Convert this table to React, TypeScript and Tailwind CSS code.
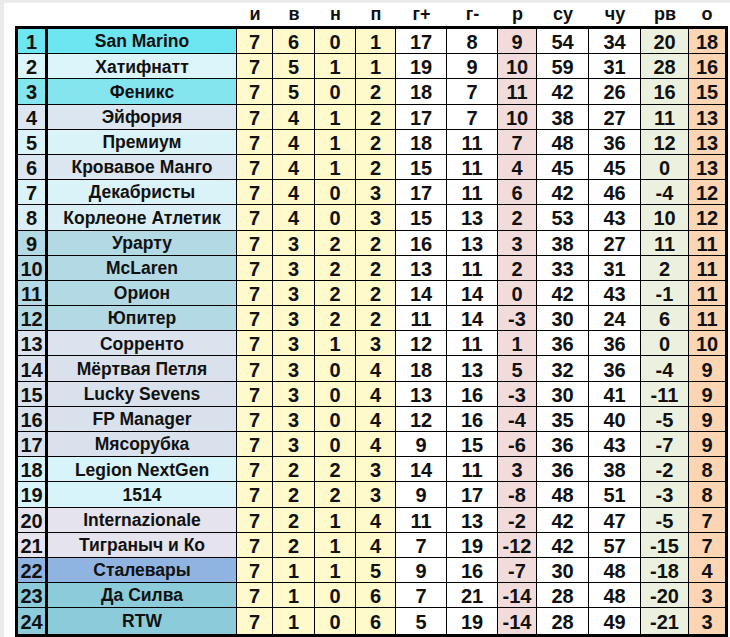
import React from 'react';

type Row = {
  name: string;
  bg: string;
  stats: number[];
};

const rows: Row[] = [
  { name: 'San Marino', bg: 'bg-[#6de6f2]', stats: [7, 6, 0, 1, 17, 8, 9, 54, 34, 20, 18] },
  { name: 'Хатифнатт', bg: 'bg-[#dbf5fa]', stats: [7, 5, 1, 1, 19, 9, 10, 59, 31, 28, 16] },
  { name: 'Феникс', bg: 'bg-[#84e5ef]', stats: [7, 5, 0, 2, 18, 7, 11, 42, 26, 16, 15] },
  { name: 'Эйфория', bg: 'bg-[#dbe6f0]', stats: [7, 4, 1, 2, 17, 7, 10, 38, 27, 11, 13] },
  { name: 'Премиум', bg: 'bg-[#d9f3f8]', stats: [7, 4, 1, 2, 18, 11, 7, 48, 36, 12, 13] },
  { name: 'Кровавое Манго', bg: 'bg-[#dbe6f0]', stats: [7, 4, 1, 2, 15, 11, 4, 45, 45, 0, 13] },
  { name: 'Декабристы', bg: 'bg-[#d9f3f8]', stats: [7, 4, 0, 3, 17, 11, 6, 42, 46, -4, 12] },
  { name: 'Корлеоне Атлетик', bg: 'bg-[#d9eff5]', stats: [7, 4, 0, 3, 15, 13, 2, 53, 43, 10, 12] },
  { name: 'Урарту', bg: 'bg-[#b3d9e4]', stats: [7, 3, 2, 2, 16, 13, 3, 38, 27, 11, 11] },
  { name: 'McLaren', bg: 'bg-[#b3d9e4]', stats: [7, 3, 2, 2, 13, 11, 2, 33, 31, 2, 11] },
  { name: 'Орион', bg: 'bg-[#b3d9e4]', stats: [7, 3, 2, 2, 14, 14, 0, 42, 43, -1, 11] },
  { name: 'Юпитер', bg: 'bg-[#b3d9e4]', stats: [7, 3, 2, 2, 11, 14, -3, 30, 24, 6, 11] },
  { name: 'Сорренто', bg: 'bg-[#dbe3ee]', stats: [7, 3, 1, 3, 12, 11, 1, 36, 36, 0, 10] },
  { name: 'Мёртвая Петля', bg: 'bg-[#d9e2ec]', stats: [7, 3, 0, 4, 18, 13, 5, 32, 36, -4, 9] },
  { name: 'Lucky Sevens', bg: 'bg-[#d9e2ec]', stats: [7, 3, 0, 4, 13, 16, -3, 30, 41, -11, 9] },
  { name: 'FP Manager', bg: 'bg-[#d9e2ec]', stats: [7, 3, 0, 4, 12, 16, -4, 35, 40, -5, 9] },
  { name: 'Мясорубка', bg: 'bg-[#d9e2ec]', stats: [7, 3, 0, 4, 9, 15, -6, 36, 43, -7, 9] },
  { name: 'Legion NextGen', bg: 'bg-[#d6f4f9]', stats: [7, 2, 2, 3, 14, 11, 3, 36, 38, -2, 8] },
  { name: '1514', bg: 'bg-[#d6f4f9]', stats: [7, 2, 2, 3, 9, 17, -8, 48, 51, -3, 8] },
  { name: 'Internazionale', bg: 'bg-[#e5e3ee]', stats: [7, 2, 1, 4, 11, 13, -2, 42, 47, -5, 7] },
  { name: 'Тиграныч и Ко', bg: 'bg-[#e5e3ee]', stats: [7, 2, 1, 4, 7, 19, -12, 42, 57, -15, 7] },
  { name: 'Сталевары', bg: 'bg-[#8fb4e1]', stats: [7, 1, 1, 5, 9, 16, -7, 30, 48, -18, 4] },
  { name: 'Да Силва', bg: 'bg-[#8ccbd9]', stats: [7, 1, 0, 6, 7, 21, -14, 28, 48, -20, 3] },
  { name: 'RTW', bg: 'bg-[#8ccbd9]', stats: [7, 1, 0, 6, 5, 19, -14, 28, 49, -21, 3] },
];

const headers = ['и', 'в', 'н', 'п', 'г+', 'г-', 'р', 'су', 'чу', 'рв', 'о'];

const statBg = [
  'bg-[#fffacc]',
  'bg-[#fffacc]',
  'bg-[#fffacc]',
  'bg-[#fffacc]',
  'bg-white',
  'bg-white',
  'bg-[#f2dcdb]',
  'bg-white',
  'bg-white',
  'bg-[#ebf1de]',
  'bg-[#fcd5b4]',
];

const cols =
  'grid grid-cols-[30px_189px_36px_42px_41px_40px_51px_51px_39px_52px_52px_48px_36px] grid-rows-[100%]';

export default function App() {
  return (
    <div className="w-[730px] h-[637px] overflow-hidden bg-white border-l-4 border-t-[3px] border-[#ebebeb] font-['Liberation_Sans',Arial,sans-serif] font-bold text-[#111]">
      <div className="ml-[11px] w-[713px]">
        <div className={`${cols} h-[23px] px-[3px] text-[18px] leading-[23px]`}>
          <div />
          <div />
          {headers.map((h) => (
            <div key={h} className="text-center">
              {h}
            </div>
          ))}
        </div>

        <div className="border-[3px] border-black">
          {rows.map((row, i) => (
            <div
              key={row.name}
              className={`${cols} h-[25.2px] leading-none ${i < rows.length - 1 ? 'border-b border-black' : ''}`}
            >
              <div className={`${row.bg} border-r-[3px] border-black flex items-center justify-center pt-[2px] text-[20px]`}>
                {i + 1}
              </div>
              <div className={`${row.bg} border-r border-black flex items-center justify-center pt-[2px] text-[17.5px] whitespace-nowrap`}>
                {row.name}
              </div>
              {row.stats.map((v, j) => (
                <div
                  key={j}
                  className={`${statBg[j]} ${j < row.stats.length - 1 ? 'border-r border-black' : ''} flex items-center justify-center pt-[2px] text-[20px]`}
                >
                  {v}
                </div>
              ))}
            </div>
          ))}
        </div>
      </div>
    </div>
  );
}
